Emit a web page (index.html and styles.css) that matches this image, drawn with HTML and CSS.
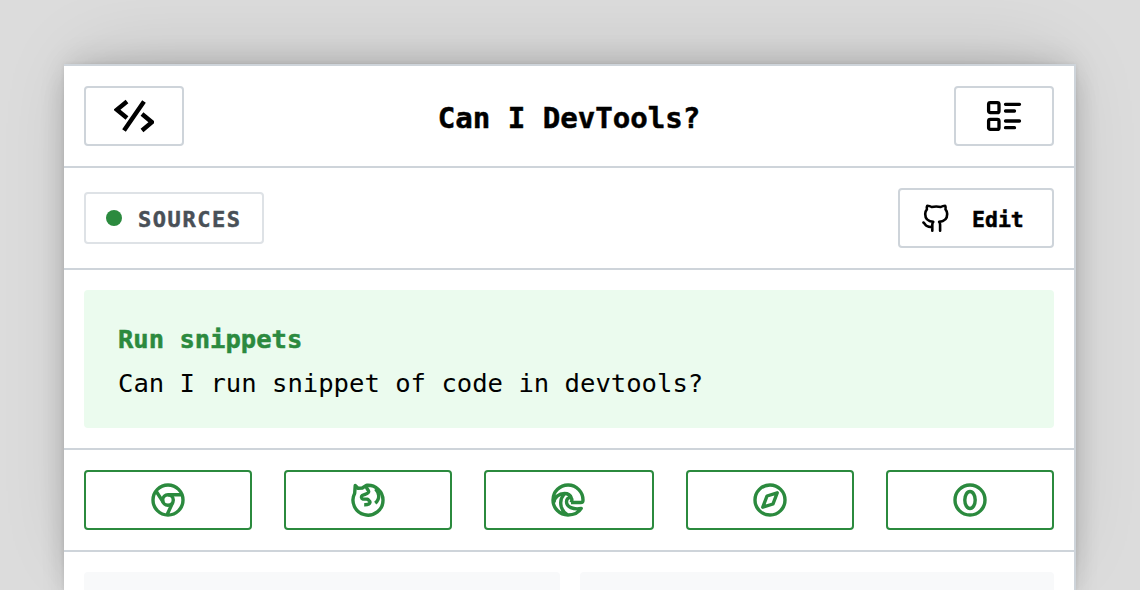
FILE: index.html
```html
<!DOCTYPE html>
<html lang="en">
<head>
<meta charset="utf-8">
<title>Can I DevTools?</title>
<link rel="stylesheet" href="styles.css">
</head>
<body>
<main class="card">
  <header class="row">
    <a class="button icon-button"><svg class="icon code" viewBox="0 0 40 40"><path d="M13 5.500 2.900 13.700 13 22M30 5.500 10 34.500M28 18l9.900 8.200L28 34.500"/></svg></a>
    <h1 class="title">Can I DevTools?</h1>
    <a class="button icon-button"><svg class="icon list" viewBox="0 0 40 40"><rect x="4.600" y="6.600" width="10.400" height="10" rx="1.700"/><rect x="4.600" y="23.400" width="10.400" height="10" rx="1.700"/><path d="M21.500 8.300h14M21.500 15h9M21.500 25h14M21.500 31.700h9"/></svg></a>
  </header>
  <div class="row">
    <span class="tag"><i class="dot"></i><span class="label">SOURCES</span></span>
    <a class="button edit"><svg class="icon github" viewBox="0 0 32 32"><path d="M12.300 28.700v-6c0-1 .2-2 1-2.800C8.700 19.500 5.200 17.500 5.200 12c0-2 .6-3.500 1.700-4.700-.4-1.300-.2-2.500.4-3.600 1.600 0 3 .4 4.400 1.300 3-.6 6-.6 9 0 1.400-.9 2.800-1.300 4.400-1.300.6 1.100.8 2.300.4 3.600 1.100 1.200 1.700 2.700 1.700 4.700 0 5.500-3.500 7.500-8.100 7.900.8.800 1 1.800 1 2.800v6M3.400 20.500c1 .5 1.700 2.200 3 3.200 1.500 1.200 3.200 1.400 5.900 1.400"/></svg><span class="label">Edit</span></a>
  </div>
  <section class="feature-row">
    <div class="feature">
      <h2 class="feature-title">Run snippets</h2>
      <p class="feature-text">Can I run snippet of code in devtools?</p>
    </div>
  </section>
  <div class="row browsers">
    <a class="browser"><svg class="icon" viewBox="0 0 36 36"><circle cx="18" cy="18" r="15"/><circle cx="18" cy="18" r="5.300"/><path d="M18 12.700h13.500M13.300 20.200 6.300 9.500M22.700 20.500 17.200 32.500"/></svg></a>
    <a class="browser"><svg class="icon" viewBox="0 0 36 36"><path d="M16.500 3.300C25.500 2.500 33 9.500 33 18a15 15 0 1 1-28.300-6.800L5.200 3.500 8 6.300l4.300-.3 4-2.700c-.8 3.200 2 3.700 2.400 6.200.2 2.200-3.700 2.500-6.500 4-1.200 1-.9 3.300.7 3.600h4.600c1 1.300 2.700 1.700 2.500 3.200-.3 2-2.600 2.600-5.800 2.500"/><path d="M25.500 6.800c2 2.200 3 4.400 3.200 6.900.2 3.200-1.200 5.700-3.500 7.500"/></svg></a>
    <a class="browser browser-wide"><svg class="icon" viewBox="0 0 36 36"><path d="M21 20.500h9.700c1.500 0 2.300-.8 2.300-2.200A15 15 0 1 0 18 33c6.500 0 11-2.800 13.200-6.500-8 1.500-14.700-1.500-14.700-6.700 0-2.800 1.700-4.200 3.300-4.200 2.200 0 2.700 2.500 1.200 4.900M21.500 16.200c-1-3-4.100-4.700-7-4.700-5.500 0-10.500 4-10.500 9M14.200 12c-3 3.500-4.200 8-3 12.500 1.200 4 3 6.800 6.300 8.200"/></svg></a>
    <a class="browser"><svg class="icon" viewBox="0 0 36 36"><circle cx="18" cy="18" r="15"/><path d="m25.200 10.800-10.200 3.200-4.200 11.200 10.200-3.200z"/></svg></a>
    <a class="browser"><svg class="icon" viewBox="0 0 36 36"><circle cx="18" cy="18" r="15"/><ellipse cx="18" cy="18" rx="5.200" ry="8.500"/></svg></a>
  </div>
  <div class="panels"><div class="panel"></div><div class="panel"></div></div>
</main>
</body>
</html>
```
FILE: styles.css
```css
* { box-sizing: border-box; }
body {
  margin: 0;
  height: 590px;
  overflow: hidden;
  padding: 64px 64px 0;
  background: #dcdcdc;
  color: #000;
  font-family: "DejaVu Sans Mono", monospace;
}
.card {
  height: 526px;
  background: #fff;
  border-top: 2px solid #ced4da;
  border-right: 2px solid #ced4da;
  box-shadow: 0 0 4px rgba(0, 0, 0, .08), 0 20px 24px rgba(0, 0, 0, .08), 0 -6px 30px -8px rgba(0, 0, 0, .2), 0 -20px 80px -20px rgba(0, 0, 0, .14);
}
.row {
  display: flex;
  align-items: center;
  justify-content: space-between;
  height: 102px;
  padding: 0 20px;
  border-bottom: 2px solid #ced4da;
}
.button {
  display: flex;
  align-items: center;
  justify-content: center;
  height: 60px;
  border: 2px solid #ced4da;
  border-radius: 4px;
}
.icon-button { width: 100px; }
.title {
  margin: 0;
  padding-top: 4px;
  font-size: 29.1px;
  line-height: 36px;
}
.title, .label, .feature-title { -webkit-text-stroke: .5px currentColor; }
.label { padding-top: 3px; }
.icon {
  width: 36px;
  height: 36px;
  fill: none;
  stroke: currentColor;
  stroke-width: 3.4;
  stroke-linejoin: round;
}
.code { width: 40px; height: 40px; stroke-width: 4.4; stroke-linejoin: miter; }
.list { width: 40px; height: 40px; stroke-width: 3.3; stroke-linecap: round; margin-left: -1px; }
.tag {
  display: flex;
  align-items: center;
  width: 180px;
  height: 52px;
  padding-left: 20px;
  border: 2px solid #dee2e6;
  border-radius: 4px;
  color: #495057;
  font-size: 22px;
  font-weight: 700;
  letter-spacing: 1.55px;
}
.dot {
  width: 16px;
  height: 16px;
  margin-right: 16px;
  border-radius: 50%;
  background: #2b8a3e;
}
.edit {
  width: 156px;
  justify-content: flex-start;
  padding-left: 20px;
  font-size: 21.5px;
  font-weight: 700;
}
.github { width: 32px; height: 32px; margin-right: 20px; stroke-width: 2.6; stroke-linecap: round; }
.feature-row { height: 180px; padding: 20px; border-bottom: 2px solid #ced4da; }
.feature { height: 138px; padding: 27px 34px; border-radius: 4px; background: #ebfbee; }
.feature-title { margin: 0; color: #2b8a3e; font-size: 25.5px; line-height: 44px; }
.feature-text { margin: 0; font-size: 25.58px; line-height: 44px; }
.browsers { color: #2b8a3e; }
.browser {
  display: flex;
  width: 168px;
  align-items: center;
  justify-content: center;
  height: 60px;
  border: 2px solid currentColor;
  border-radius: 4px;
}
.browser-wide { width: 170px; padding-right: 2px; }
.panels { display: grid; grid-template-columns: 476px 474px; gap: 20px; padding: 20px 20px 0; }
.panel { height: 18px; border-radius: 4px 4px 0 0; background: #f8f9fa; }
```
